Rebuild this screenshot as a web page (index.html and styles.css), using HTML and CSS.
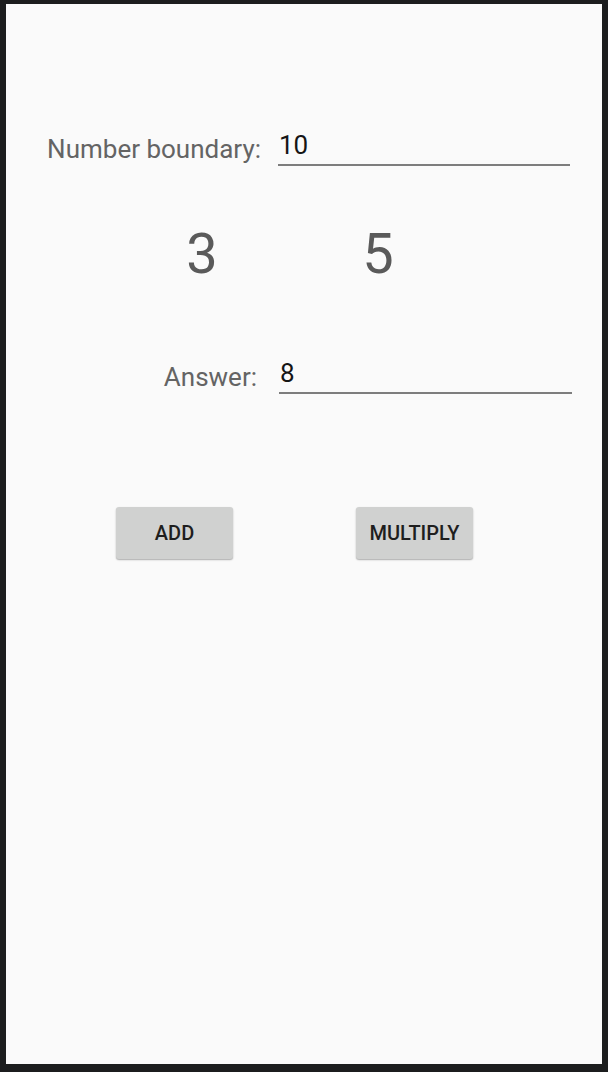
FILE: index.html
```html
<!DOCTYPE html>
<html>
<head>
<meta charset="utf-8">
<link rel="stylesheet" href="styles.css">
</head>
<body>
<div class="screen">
  <div class="row row-boundary">
    <div class="label">Number boundary:</div>
    <div class="field"><span class="value">10</span></div>
  </div>
  <div class="numbers">
    <div class="num">3</div>
    <div class="num">5</div>
  </div>
  <div class="row row-answer">
    <div class="label">Answer:</div>
    <div class="field"><span class="value">8</span></div>
  </div>
  <div class="buttons">
    <button class="btn">ADD</button>
    <button class="btn">MULTIPLY</button>
  </div>
</div>
</body>
</html>
```
FILE: styles.css
```css
html, body {
  margin: 0;
  padding: 0;
}
body {
  background: #1c1d1e;
  width: 608px;
  height: 1072px;
  overflow: hidden;
  font-family: Roboto, "Noto Sans", sans-serif;
}
.screen {
  margin: 4px 6px 0 6px;
  width: 596px;
  height: 1060px;
  background: #fafafa;
  overflow: hidden;
}
.row {
  display: grid;
  align-items: start;
}
.row-boundary {
  grid-template-columns: 255px 292px;
  column-gap: 17px;
  padding-top: 130px;
}
.row-answer {
  grid-template-columns: 251px 293px;
  column-gap: 22px;
  padding-top: 75px;
}
.label {
  text-align: right;
  font-size: 26px;
  line-height: 30px;
  color: #646464;
}
.field {
  margin-top: -4px;
  padding-left: 1px;
  padding-bottom: 4px;
  border-bottom: 2px solid #7d7d7d;
  font-size: 26px;
  line-height: 30px;
  color: #151515;
}
.numbers {
  display: flex;
  padding-left: 146px;
  column-gap: 76px;
  margin-top: 55px;
}
.num {
  width: 100px;
  text-align: center;
  font-size: 56px;
  line-height: 66px;
  color: #5a5a5a;
}
.buttons {
  display: flex;
  padding-left: 110px;
  column-gap: 123px;
  margin-top: 113px;
}
.btn {
  width: 117px;
  height: 52px;
  border: none;
  border-radius: 3px;
  background: #d0d1d0;
  box-shadow: 0 1px 2px rgba(0, 0, 0, 0.22), 0 1px 1px rgba(0, 0, 0, 0.12);
  font-family: Roboto, "Noto Sans", sans-serif;
  font-weight: 500;
  font-size: 20px;
  color: #1e1e1e;
  padding: 0 0 1px 0;
}
```
